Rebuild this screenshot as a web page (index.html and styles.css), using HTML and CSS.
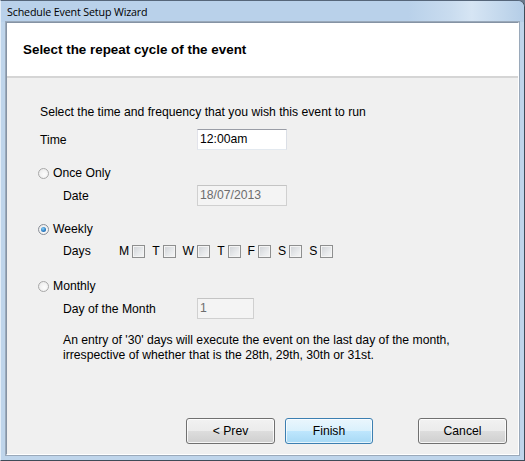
FILE: index.html
```html
<!DOCTYPE html>
<html>
<head>
<meta charset="utf-8">
<link rel="stylesheet" href="styles.css">
</head>
<body>
<div class="window">
  <div class="titlebar">Schedule Event Setup Wizard</div>
  <div class="client">
    <div class="header">
      <h1 class="heading">Select the repeat cycle of the event</h1>
    </div>
    <div class="content">
      <div class="intro">Select the time and frequency that you wish this event to run</div>
      <div class="field-row row-time">
        <span class="label label-top">Time</span>
        <span class="textbox">12:00am</span>
      </div>
      <div class="radio-row row-once">
        <span class="radio"></span><span>Once Only</span>
      </div>
      <div class="field-row row-sub">
        <span class="label label-sub">Date</span>
        <span class="textbox disabled">18/07/2013</span>
      </div>
      <div class="radio-row row-weekly">
        <span class="radio checked"></span><span>Weekly</span>
      </div>
      <div class="days-row">
        <span class="label label-days">Days</span>
        <div class="days">
          <span class="day">M<span class="check"></span></span>
          <span class="day">T<span class="check"></span></span>
          <span class="day">W<span class="check"></span></span>
          <span class="day">T<span class="check"></span></span>
          <span class="day">F<span class="check"></span></span>
          <span class="day">S<span class="check"></span></span>
          <span class="day">S<span class="check"></span></span>
        </div>
      </div>
      <div class="radio-row row-monthly">
        <span class="radio"></span><span>Monthly</span>
      </div>
      <div class="field-row row-sub">
        <span class="label label-sub">Day of the Month</span>
        <span class="textbox disabled short">1</span>
      </div>
      <p class="note">An entry of '30' days will execute the event on the last day of the month,<br>irrespective of whether that is the 28th, 29th, 30th or 31st.</p>
    </div>
    <div class="footer">
      <button class="btn btn-prev">&lt; Prev</button>
      <button class="btn btn-finish focused">Finish</button>
      <button class="btn btn-cancel">Cancel</button>
    </div>
  </div>
</div>
</body>
</html>
```

FILE: styles.css
```css
* { box-sizing: border-box; }
html, body { margin: 0; padding: 0; }
body {
  width: 525px;
  height: 461px;
  overflow: hidden;
  background: #6b7a8c;
  font-family: "Liberation Sans", Arial, sans-serif;
  font-size: 12.2px;
  color: #000;
}
.window {
  width: 525px;
  height: 461px;
  display: flex;
  flex-direction: column;
  background: #bfd5eb;
  border-right: 1px solid #3f4b58;
  border-bottom: 1px solid #3f4b58;
  border-top: 1px solid #56667a;
  border-left: 1px solid #e4eef8;
  border-top-right-radius: 7px;
  padding: 0 5px 5px 5px;
}
.titlebar {
  height: 21px;
  flex: none;
  margin: 0 -5px;
  padding: 4px 0 0 6px;
  font-family: "Open Sans", "Liberation Sans", sans-serif;
  font-size: 10.7px;
  letter-spacing: -0.15px;
  color: #000;
  background: linear-gradient(to right, #b9d1ea 0%, #b9d1ea 78%, #c9dcef 86%, #d6e5f4 90%, #c2d7ec 96%, #b4cde7 100%);
  border-top-right-radius: 6px;
}
.client {
  flex: 1;
  display: flex;
  flex-direction: column;
  background: #f0f0f0;
  border: 1px solid #8593a4;
  border-bottom-color: #ffffff;
  border-right-color: #ffffff;
  box-shadow: 0 0 0 1px #9aa9ba;
}
.header {
  height: 55px;
  flex: none;
  background: #fff;
  border-bottom: 2px solid #d5d5d5;
  display: flex;
  align-items: center;
  padding-left: 16px;
}
.heading {
  margin: 0;
  font-size: 13.4px;
  font-weight: bold;
}
.content {
  flex: 1;
  display: flex;
  flex-direction: column;
  padding-left: 33px;
}
.intro { height: 16px; line-height: 16px; margin-top: 26px; }
.field-row { display: flex; align-items: center; height: 21px; }
.row-time { margin-top: 9px; }
.row-sub { margin-top: 4px; padding-left: 23px; }
.label-top { width: 157px; }
.label-sub { width: 134px; }
.textbox {
  width: 90px;
  height: 21px;
  line-height: 19px;
  padding-left: 2px;
  background: #fff;
  border: 1px solid #abadb3;
  border-top-color: #9a9da6;
  border-left-color: #e2e3ea;
  border-right-color: #dbdfe6;
  border-bottom-color: #e3e9ef;
}
.textbox.disabled {
  background: #f4f4f4;
  color: #6d6d6d;
  border-color: #d0d0d0;
  border-top-color: #c4c4c4;
}
.textbox.short { width: 57px; }
.radio-row { display: flex; align-items: center; height: 16px; margin-left: -2px; }
.row-once { margin-top: 15px; }
.row-weekly { margin-top: 15px; }
.row-monthly { margin-top: 19px; }
.radio {
  width: 11px;
  height: 11px;
  border-radius: 50%;
  border: 1px solid #a8a8a8;
  background: radial-gradient(circle at 60% 60%, #fdfdfd 0%, #f0f0f0 60%, #e2e2e2 100%);
  margin-right: 4px;
  display: flex;
  align-items: center;
  justify-content: center;
}
.radio.checked { border-color: #8a8f98; }
.radio.checked::after {
  content: "";
  width: 5px;
  height: 5px;
  border-radius: 50%;
  background: radial-gradient(circle at 40% 35%, #8ad1f5 0%, #2d80c7 55%, #1b4e8e 100%);
}
.days-row { display: flex; align-items: center; height: 16px; margin-top: 6px; padding-left: 23px; }
.label-days { width: 56px; }
.days { display: flex; align-items: center; gap: 7px; }
.day { display: flex; align-items: center; gap: 3px; }
.check {
  width: 13px;
  height: 13px;
  border: 1px solid #8e8f8f;
  background: linear-gradient(135deg, #cfd2d6 0%, #e8eaec 60%, #f6f6f6 100%);
  box-shadow: inset 0 0 0 1px #f4f4f4;
}
.note {
  margin: 14px 0 0 23px;
  line-height: 15px;
}
.footer {
  flex: none;
  display: flex;
  padding: 0 11px 10px 179px;
  height: 36px;
}
.btn {
  height: 26px;
  width: 89px;
  font-family: "Liberation Sans", Arial, sans-serif;
  font-size: 12.2px;
  color: #000;
  border: 1px solid #707070;
  border-radius: 3px;
  background: linear-gradient(to bottom, #f2f2f2 0%, #ebebeb 50%, #dddddd 51%, #cfcfcf 100%);
  box-shadow: inset 0 0 0 1px rgba(255,255,255,0.8);
  padding: 0;
}
.btn-finish { margin-left: 10px; width: 88px; }
.btn-cancel { margin-left: auto; }
.btn.focused {
  border-color: #3c7fb1;
  background: linear-gradient(to bottom, #eaf6fd 0%, #d9f0fc 50%, #bee6fd 51%, #a7d9f5 100%);
  box-shadow: inset 0 0 0 1px rgba(255,255,255,0.7);
}
```
